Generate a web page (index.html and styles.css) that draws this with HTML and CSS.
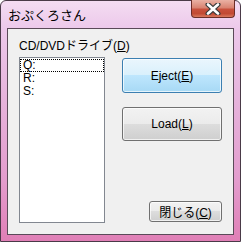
FILE: index.html
```html
<!DOCTYPE html>
<html lang="ja">
<head>
    <meta charset="UTF-8">
    <title>おぷくろさん</title>
    <link rel="stylesheet" href="styles.css">
</head>
<body>
    <div class="window">
        <div class="titlebar">
            <span class="title">おぷくろさん</span>
            <div class="close-x">
                <svg width="16" height="12" viewBox="0 0 16 12">
                    <path d="M3 1.5 L13 10.5 M13 1.5 L3 10.5" stroke="#3b3b3b" stroke-width="5" stroke-linecap="round"/>
                    <path d="M3 1.5 L13 10.5 M13 1.5 L3 10.5" stroke="#ffffff" stroke-width="2.6" stroke-linecap="round"/>
                </svg>
            </div>
        </div>
        <div class="client">
            <div class="left">
                <label class="drive-label">CD/DVDドライブ(<u>D</u>)</label>
                <div class="listbox">
                    <div class="item focused">Q:</div>
                    <div class="item">R:</div>
                    <div class="item">S:</div>
                </div>
            </div>
            <div class="right">
                <button class="btn btn-default">Eject(<u>E</u>)</button>
                <button class="btn btn-load">Load(<u>L</u>)</button>
                <button class="btn btn-close">閉じる(<u>C</u>)</button>
            </div>
        </div>
    </div>
</body>
</html>
```

FILE: styles.css
```css
body {
    margin: 0;
    font-family: "Liberation Sans", "Noto Sans CJK JP", sans-serif;
    font-size: 12px;
    background: #ffffff;
}
.window {
    position: relative;
    width: 241px;
    height: 242px;
    box-sizing: border-box;
    border: 1px solid #4a3a48;
    border-radius: 6px 6px 0 0;
    padding: 0 6px 6px 6px;
    background: linear-gradient(#f4dcf2 0%, #ecc8ea 12%, #e6b4dc 40%, #e39ccd 75%, #e07fb6 100%);
    display: flex;
    flex-direction: column;
}
.titlebar {
    height: 27px;
    display: flex;
    align-items: center;
    padding-left: 1px;
}
.title {
    font-family: "Noto Sans CJK JP", sans-serif;
    font-size: 13px;
    color: #000;
}
.close-x {
    position: absolute;
    top: -1px;
    right: 5px;
    width: 44px;
    height: 18px;
    box-sizing: border-box;
    border: 1px solid #6b2e28;
    border-top: none;
    border-radius: 0 0 4px 4px;
    background: linear-gradient(#eab1a4 0%, #d98472 45%, #c8503c 55%, #c24a33 80%, #d9785e 100%);
    display: flex;
    align-items: center;
    justify-content: center;
}
.client {
    flex: 1;
    border: 1px solid #5a4a58;
    background: #f0f0f0;
    display: flex;
    gap: 17px;
    padding: 9px 11px 0 11px;
}
.left {
    width: 86px;
    display: flex;
    flex-direction: column;
}
.drive-label {
    height: 16px;
    line-height: 16px;
    margin-bottom: 3px;
    color: #000;
    white-space: nowrap;
}
.listbox {
    height: 166px;
    box-sizing: border-box;
    border: 1px solid #828790;
    background: #fff;
    padding: 1px 0;
}
.item {
    height: 13px;
    line-height: 13px;
    padding-left: 3px;
    box-sizing: border-box;
}
.item.focused {
    outline: 1px dotted #000;
    outline-offset: -1px;
}
.right {
    flex: 1;
    display: flex;
    flex-direction: column;
    align-items: flex-end;
    padding-top: 20px;
}
.btn {
    font-family: inherit;
    font-size: 12px;
    color: #000;
    border: 1px solid #707070;
    border-radius: 3px;
    background: linear-gradient(#f2f2f2 0%, #ebebeb 49%, #dddddd 50%, #cfcfcf 100%);
    box-shadow: inset 0 0 0 1px rgba(255, 255, 255, 0.7);
    padding: 0;
}
.btn-default {
    width: 100px;
    height: 35px;
    border-color: #3c7fb1;
    background: linear-gradient(#eaf6fd 0%, #d9f0fc 49%, #bee6fd 50%, #a7d9f5 100%);
}
.btn-load {
    width: 100px;
    height: 34px;
    margin-top: 14px;
}
.btn-close {
    width: 73px;
    height: 21px;
    margin-top: 60px;
}
```
